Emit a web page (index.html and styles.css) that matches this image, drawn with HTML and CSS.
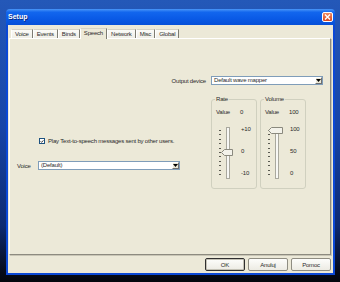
FILE: index.html
```html
<!DOCTYPE html>
<html lang="en">
<head>
    <meta charset="UTF-8">
    <title>Setup</title>
    <link rel="stylesheet" href="styles.css">
</head>
<body>
    <div class="desktop">
        <div class="window">
            <div class="titlebar">
                <span class="title">Setup</span>
                <span class="close-btn">
                    <svg width="9" height="8" viewBox="0 0 9 8"><path d="M2 1.5 L7 6.5 M7 1.5 L2 6.5" stroke="#fff" stroke-width="1.4"/></svg>
                </span>
            </div>
            <div class="window-body">
                <div class="tabs">
                    <span class="tab">Voice</span>
                    <span class="tab">Events</span>
                    <span class="tab">Binds</span>
                    <span class="tab active">Speech</span>
                    <span class="tab">Network</span>
                    <span class="tab">Misc</span>
                    <span class="tab">Global</span>
                </div>
                <div class="panel">
                    <div class="output-row">
                        <span class="field-label">Output device</span>
                        <div class="combo output-combo">
                            <span class="combo-text">Default wave mapper</span>
                            <span class="drop-btn"><svg width="5" height="3" viewBox="0 0 5 3"><path d="M0 0 H5 L2.5 3 Z" fill="#000"/></svg></span>
                        </div>
                    </div>
                    <div class="main-row">
                        <div class="left-col">
                            <label class="check-row">
                                <span class="check-box"><svg width="5" height="5" viewBox="0 0 5 5"><path d="M0.8 2.3 L2 3.6 L4.3 1" stroke="#222" stroke-width="1.1" fill="none"/></svg></span>
                                Play Text-to-speech messages sent by other users.
                            </label>
                            <div class="voice-row">
                                <span class="voice-label">Voice</span>
                                <div class="combo voice-combo">
                                    <span class="combo-text">(Default)</span>
                                    <span class="drop-btn"><svg width="5" height="3" viewBox="0 0 5 3"><path d="M0 0 H5 L2.5 3 Z" fill="#000"/></svg></span>
                                </div>
                            </div>
                        </div>
                        <div class="groups">
                            <fieldset class="group">
                                <legend>Rate</legend>
                                <div class="value-row"><span class="value-name">Value</span><span>0</span></div>
                                <div class="slider-row">
                                    <svg class="slider" width="22" height="54" viewBox="0 0 22 54">
                                        <g fill="#5a5a52">
                                            <rect x="7" y="4" width="2" height="1"/><rect x="7" y="8" width="2" height="1"/><rect x="7" y="13" width="2" height="1"/><rect x="7" y="17" width="2" height="1"/><rect x="7" y="22" width="2" height="1"/><rect x="7" y="26" width="2" height="1"/><rect x="7" y="30" width="2" height="1"/><rect x="7" y="35" width="2" height="1"/><rect x="7" y="39" width="2" height="1"/><rect x="7" y="44" width="2" height="1"/><rect x="7" y="48" width="2" height="1"/>
                                        </g>
                                        <rect x="14.5" y="1.5" width="3" height="51" fill="#f8f8f5" stroke="#a9a89e"/>
                                        <path d="M9.5 26.5 L12.5 23.5 H20.5 V29.5 H12.5 Z" fill="#f3f2ea" stroke="#8a897e"/>
                                    </svg>
                                    <div class="scale"><span>+10</span><span>0</span><span>-10</span></div>
                                </div>
                            </fieldset>
                            <fieldset class="group">
                                <legend>Volume</legend>
                                <div class="value-row"><span class="value-name">Value</span><span>100</span></div>
                                <div class="slider-row">
                                    <svg class="slider" width="22" height="54" viewBox="0 0 22 54">
                                        <g fill="#5a5a52">
                                            <rect x="7" y="4" width="2" height="1"/><rect x="7" y="8" width="2" height="1"/><rect x="7" y="13" width="2" height="1"/><rect x="7" y="17" width="2" height="1"/><rect x="7" y="22" width="2" height="1"/><rect x="7" y="26" width="2" height="1"/><rect x="7" y="30" width="2" height="1"/><rect x="7" y="35" width="2" height="1"/><rect x="7" y="39" width="2" height="1"/><rect x="7" y="44" width="2" height="1"/><rect x="7" y="48" width="2" height="1"/>
                                        </g>
                                        <rect x="14.5" y="1.5" width="3" height="51" fill="#f8f8f5" stroke="#a9a89e"/>
                                        <path d="M7.5 4.5 L10.5 1.5 H21.5 V7.5 H10.5 Z" fill="#f3f2ea" stroke="#8a897e"/>
                                    </svg>
                                    <div class="scale"><span>100</span><span>50</span><span>0</span></div>
                                </div>
                            </fieldset>
                        </div>
                    </div>
                </div>
                <div class="buttons">
                    <button class="btn default">OK</button>
                    <button class="btn">Anuluj</button>
                    <button class="btn">Pomoc</button>
                </div>
            </div>
        </div>
    </div>
</body>
</html>
```

FILE: styles.css
```css
* {
    box-sizing: border-box;
}
body {
    margin: 0;
    font-family: "Liberation Sans", Arial, sans-serif;
    font-size: 6px;
    letter-spacing: -0.2px;
    color: #2a2a2a;
}
.desktop {
    width: 340px;
    height: 282px;
    overflow: hidden;
    padding: 9px 0 0 6px;
    background: linear-gradient(to bottom, #2458b8 0%, #1745a8 45%, #0d2a72 80%, #060b1c 96%, #04060c 100%);
}
.window {
    width: 329px;
    height: 266px;
    display: flex;
    flex-direction: column;
}
.titlebar {
    height: 16px;
    flex: none;
    display: flex;
    align-items: flex-start;
    justify-content: space-between;
    padding: 0 2px;
    border-radius: 4px 4px 0 0;
    background: linear-gradient(to bottom, #4a96f8 0%, #1266ee 20%, #0a5ae6 60%, #0650d8 100%);
}
.title {
    margin-top: 4px;
    font-weight: bold;
    font-size: 7px;
    line-height: 8px;
    letter-spacing: 0;
    color: #fff;
    text-shadow: 1px 1px 0 #0a2a80;
}
.close-btn {
    margin-top: 3px;
    width: 11px;
    height: 10px;
    display: flex;
    align-items: center;
    justify-content: center;
    border: 1px solid #fff;
    border-radius: 2px;
    background: linear-gradient(to bottom, #f08a62, #d9441c);
}
.window-body {
    flex: 1;
    background: #ece9d8;
    border: 2px solid #0b48d6;
    border-top: none;
    padding: 3px 2px 2px 1px;
    display: flex;
    flex-direction: column;
}
.tabs {
    height: 10px;
    display: flex;
    align-items: flex-end;
    padding-left: 2px;
}
.tab {
    height: 9px;
    line-height: 8px;
    padding: 0 3px;
    background: linear-gradient(to bottom, #fbfbf8, #efeee6);
    border-top: 1px solid #d6d3c4;
    border-left: 1px solid #fff;
    border-right: 1px solid #7d7c72;
}
.tab.active {
    height: 11px;
    line-height: 9px;
    margin-bottom: -1px;
    position: relative;
    z-index: 1;
    background: #ece9d8;
}
.panel {
    height: 217px;
    border: 1px solid;
    border-color: #fff #8d8b80 #8d8b80 #fff;
    box-shadow: 1px 1px 0 #c9c6b6;
    background: #ece9d8;
}
.output-row {
    margin-top: 37px;
    padding-right: 7px;
    display: flex;
    justify-content: flex-end;
    align-items: center;
}
.field-label {
    margin-right: 5px;
}
.combo {
    height: 9px;
    display: flex;
    align-items: center;
    justify-content: space-between;
    background: #fff;
    border: 1px solid #7f9db9;
    padding: 0 0 0 2px;
}
.combo-text {
    line-height: 7px;
}
.drop-btn {
    width: 7px;
    height: 7px;
    display: flex;
    align-items: center;
    justify-content: center;
    background: #ece9d8;
    border: 1px solid;
    border-color: #fff #707070 #707070 #fff;
}
.output-combo {
    width: 112px;
}
.main-row {
    margin-top: 11px;
    display: flex;
    justify-content: space-between;
    padding-right: 24px;
}
.left-col {
    padding-top: 42px;
}
.check-row {
    display: flex;
    align-items: center;
    padding-left: 29px;
    height: 6px;
}
.check-box {
    width: 6px;
    height: 6px;
    margin-right: 3px;
    display: flex;
    align-items: center;
    justify-content: center;
    background: #fff;
    border: 1px solid #1c5180;
}
.voice-row {
    margin-top: 17px;
    padding-left: 7px;
    display: flex;
    align-items: center;
}
.voice-label {
    width: 21px;
}
.voice-combo {
    width: 142px;
}
.groups {
    display: flex;
    gap: 3px;
}
.group {
    width: 46px;
    height: 93px;
    margin: 0;
    padding: 0;
    border: 1px solid #d0d0bf;
    border-radius: 3px;
}
.group legend {
    margin-left: 3px;
    padding: 0 1px;
    line-height: 6px;
}
.value-row {
    margin-top: 7px;
    padding-left: 4px;
    display: flex;
    line-height: 7px;
}
.value-name {
    width: 24px;
}
.slider-row {
    margin-top: 10px;
    display: flex;
}
.slider {
    display: block;
}
.scale {
    margin-left: 7px;
    height: 50px;
    display: flex;
    flex-direction: column;
    justify-content: space-between;
    line-height: 6px;
}
.buttons {
    margin-top: 3px;
    display: flex;
    justify-content: flex-end;
    gap: 3px;
}
.btn {
    width: 40px;
    height: 13px;
    padding: 0;
    font-family: "Liberation Sans", Arial, sans-serif;
    font-size: 6px;
    letter-spacing: -0.2px;
    color: #2a2a2a;
    background: linear-gradient(to bottom, #fdfdfb, #ecebe3);
    border: 1px solid #8f8d82;
    border-radius: 2px;
}
.btn.default {
    border-color: #2f2f2f;
    box-shadow: inset 0 0 0 1px #c3c1b5;
}
```
